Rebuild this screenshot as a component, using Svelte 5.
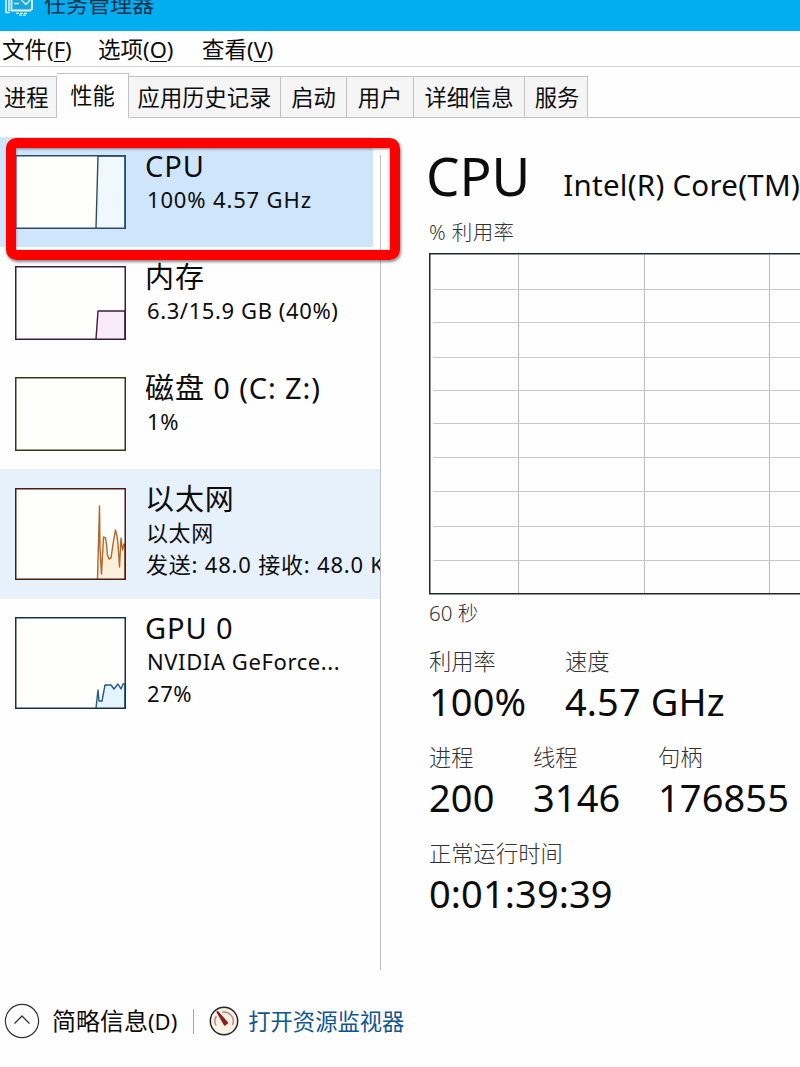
<script>
  const menus = [
    { label: '文件', key: 'F', width: 96 },
    { label: '选项', key: 'O', width: 104 },
    { label: '查看', key: 'V', width: 100 },
  ];

  const tabs = [
    { label: '进程', width: 57 },
    { label: '性能', width: 72 },
    { label: '应用历史记录', width: 152 },
    { label: '启动', width: 66 },
    { label: '用户', width: 67 },
    { label: '详细信息', width: 111 },
    { label: '服务', width: 63 },
  ];
  let activeTab = $state('性能');

  const resources = [
    { id: 'cpu', title: 'CPU', lines: ['100% 4.57 GHz'], stroke: '#2c4c66', fill: '#eef8fd', h: 74,
      path: 'M81 73 L83 1 L110 1 L110 73' },
    { id: 'mem', title: '内存', lines: ['6.3/15.9 GB (40%)'], stroke: '#3f1a40', fill: '#f8ecf8', h: 74,
      path: 'M81 73 L83 45 L110 45 L110 73' },
    { id: 'disk', title: '磁盘 0 (C: Z:)', lines: ['1%'], stroke: '#35391a', fill: 'none', h: 74, path: '' },
    { id: 'net', title: '以太网', lines: ['以太网', '发送: 48.0 接收: 48.0 Kbps'], stroke: '#4a1f12', fill: '#fcefdc', h: 92,
      line: '#b4652a',
      path: 'M82.5 91 L84.5 18 L85 60 L86.5 86 L88.5 49 L90.5 50 L91.5 56 L92.5 67 L94 71 L96 70 L98 56 L99 50 L100.5 42 L102 48 L103 56 L104.5 79 L106 50 L107.5 62 L109 56 L110 56 L110 91' },
    { id: 'gpu', title: 'GPU 0', lines: ['NVIDIA GeForce...', '27%'], stroke: '#16324a', fill: '#e3f4fc', h: 92,
      line: '#235a80',
      path: 'M81 91 L83 73 L84 84 L87 84 L90 68 L96 68 L99 72 L103 67 L106 72 L108 67 L110 67 L110 91' },
  ];
  let selected = $state('cpu');

  const gridX = [89, 215, 340];
  const gridY = [36, 69, 104, 137, 170, 204, 238, 273, 307];

  const stats = [
    [
      { label: '利用率', value: '100%', width: 136 },
      { label: '速度', value: '4.57 GHz', width: 200 },
    ],
    [
      { label: '进程', value: '200', width: 104 },
      { label: '线程', value: '3146', width: 125 },
      { label: '句柄', value: '176855', width: 140 },
    ],
    [{ label: '正常运行时间', value: '0:01:39:39', width: 240 }],
  ];
</script>

<div class="window">
  <header class="titlebar">
    <svg class="app-icon" width="34" height="18" viewBox="0 0 34 18">
      <path d="M6 0 V12.5 H10 M9 0 V11" fill="none" stroke="#d9f2fd" stroke-width="1.6" />
      <path d="M11.5 -6 H32 V9 L30 10.5 H11.5 Z" fill="#1ba6df" stroke="#eefaff" stroke-width="1.8" />
      <path d="M14 3.5 H19 M21.5 0 L26 4.5 L30 0" fill="none" stroke="#c9edfb" stroke-width="1.5" />
      <path d="M16 13.4 H28 M19 15.2 H27" stroke="#e2f5fd" stroke-width="1.2" stroke-dasharray="3 1" />
    </svg>
    <span>任务管理器</span>
  </header>

  <nav class="menubar">
    {#each menus as m (m.key)}
      <span class="menu" style="width: {m.width}px">{m.label}<span class="key">(<u>{m.key}</u>)</span></span>
    {/each}
  </nav>

  <div class="tabs">
    {#each tabs as t (t.label)}
      <button class="tab" class:active={t.label === activeTab} style="width: {t.width}px" onclick={() => (activeTab = t.label)}>
        {t.label}
      </button>
    {/each}
    <div class="tab-rest"></div>
  </div>

  <div class="body">
    <aside class="sidebar">
      {#each resources as r (r.id)}
        <button class="item {r.id}" class:selected={r.id === selected} onclick={() => (selected = r.id)}>
          <svg class="thumb" width="111" height={r.h} viewBox="0 0 111 {r.h}">
            <rect x="0.75" y="0.75" width="109.5" height={r.h - 1.5} fill="#fefefd" />
            {#if r.path}
              <path d={r.path} fill={r.fill} stroke={r.line ?? r.stroke} stroke-width="1.4" stroke-linejoin="round" />
            {/if}
            <rect x="0.75" y="0.75" width="109.5" height={r.h - 1.5} fill="none" stroke={r.stroke} stroke-width="1.5" />
          </svg>
          <div class="info">
            <div class="title">{r.title}</div>
            {#each r.lines as line}
              <div class="line">{line}</div>
            {/each}
          </div>
        </button>
      {/each}
      <div class="divider"></div>
      <div class="marker"></div>
    </aside>

    <main class="detail">
      <div class="heading">
        <h1>CPU</h1>
        <span class="model">Intel(R) Core(TM)</span>
      </div>
      <div class="caption top">% 利用率</div>
      <svg class="graph" width="380" height="342" viewBox="0 0 380 342">
        {#each gridX as x}
          <line x1={x + 0.5} y1="2" x2={x + 0.5} y2="340" stroke="#bcbcbe" />
        {/each}
        {#each gridY as y}
          <line x1="4" y1={y + 0.5} x2="380" y2={y + 0.5} stroke="#c9c9cb" />
        {/each}
        <rect x="0.75" y="0.75" width="390" height="340" fill="none" stroke="#1e2830" stroke-width="1.5" />
      </svg>
      <div class="caption">60 秒</div>

      <div class="stats">
        {#each stats as row}
          <div class="stat-row">
            {#each row as s (s.label)}
              <div class="stat" style="width: {s.width}px">
                <div class="label">{s.label}</div>
                <div class="value">{s.value}</div>
              </div>
            {/each}
          </div>
        {/each}
      </div>
    </main>
  </div>

  <footer class="footer">
    <svg width="36" height="36" viewBox="0 0 36 36" fill="none" stroke="#333">
      <circle cx="18" cy="18" r="16.6" stroke-width="1.2" />
      <path d="M10.5 20.5 L18 13 L25.5 20.5" stroke-width="1.3" />
    </svg>
    <span class="less">简略信息<span class="key">(D)</span></span>
    <span class="sep"></span>
    <svg class="gauge" width="30" height="30" viewBox="0 0 30 30">
      <circle cx="15" cy="15" r="13.7" fill="#f6f2e4" stroke="#2c2424" stroke-width="1.5" />
      <path d="M7 19.5 A9.3 9.3 0 0 1 7.5 10 M13 6.2 A9.3 9.3 0 0 1 23.5 19" fill="none" stroke="#c98483" stroke-width="1.5" />
      <path d="M8.5 6 L18.2 16.8 L15.8 18.8 Z" fill="#8e1d24" stroke="#8e1d24" stroke-width="2" stroke-linejoin="round" />
    </svg>
    <a href="#resmon">打开资源监视器</a>
  </footer>
</div>

<style>
  :global(body) {
    margin: 0;
    background: #fefefe;
  }
  .window {
    width: 800px;
    height: 1067px;
    overflow: hidden;
    display: flex;
    flex-direction: column;
    background: #fefefe;
    color: #0c0c0c;
    font-family: 'Noto Sans', 'Noto Sans CJK SC', sans-serif;
    font-size: 22px;
  }
  button {
    font: inherit;
    color: inherit;
    border: 0;
    margin: 0;
    padding: 0;
    background: none;
    text-align: left;
  }
  .titlebar {
    height: 31px;
    flex: none;
    display: flex;
    align-items: flex-start;
    background: #02aeef;
    overflow: hidden;
  }
  .titlebar span {
    margin: -13px 0 0 10px;
    line-height: 32px;
    color: #07304c;
  }
  .app-icon {
    flex: none;
  }
  .menubar {
    height: 35px;
    flex: none;
    display: flex;
    padding-left: 2px;
    border-bottom: 1px solid #d4d4d6;
    line-height: 37px;
    font-size: 22.5px;
  }
  .key {
    font-size: 22px;
  }
  .menu {
    white-space: nowrap;
  }
  .menu u {
    text-decoration-thickness: 1px;
    text-underline-offset: 3px;
  }
  .tabs {
    flex: none;
    height: 45px;
    margin-top: 6px;
    display: flex;
    align-items: flex-end;
  }
  .tab {
    box-sizing: border-box;
    flex: none;
    height: 42px;
    line-height: 41px;
    background: #f5f5f5;
    border: 1px solid #c2c2c4;
    border-left: 0;
    text-align: center;
    white-space: nowrap;
    font-size: 22.3px;
  }
  .tab:first-child {
    text-align: left;
    padding-left: 4px;
  }
  .tab.active {
    height: 45px;
    line-height: 38px;
    background: #fefefe;
    border-bottom-color: #fefefe;
  }
  .tab:last-of-type {
    padding-left: 2px;
  }
  .tab-rest {
    flex: 1;
    border-bottom: 1px solid #c2c2c4;
  }
  .body {
    flex: none;
    height: 852px;
    display: flex;
  }
  .sidebar {
    position: relative;
    flex: none;
    width: 381px;
    padding-top: 19px;
    box-sizing: border-box;
  }
  .item {
    box-sizing: border-box;
    width: 380px;
    height: 111px;
    display: flex;
    padding: 18px 0 0 15px;
    overflow: hidden;
  }
  .item.selected {
    width: 373px;
    height: 110px;
    margin-bottom: 1px;
    background: #cfe5fb;
  }
  .item.disk {
    height: 110px;
  }
  .item.net {
    height: 130px;
    padding-top: 19px;
    background: #e6f1fc;
  }
  .item.gpu {
    height: 129px;
  }
  .thumb {
    flex: none;
  }
  .info {
    margin: -7px 0 0 19px;
    white-space: nowrap;
  }
  .title {
    height: 35px;
    line-height: 35px;
    font-size: 29px;
    letter-spacing: 0.9px;
  }
  .line {
    height: 31.5px;
    line-height: 32px;
    padding-left: 2px;
    letter-spacing: 0.6px;
  }
  .cpu .line {
    letter-spacing: 0.85px;
  }
  .net .line {
    padding-left: 1px;
  }
  .net .line:last-child {
    letter-spacing: 0.8px;
  }
  .divider {
    position: absolute;
    left: 380px;
    top: 37px;
    width: 1px;
    height: 815px;
    background: #bdbdbf;
  }
  .marker {
    position: absolute;
    left: 6px;
    top: 20px;
    box-sizing: border-box;
    width: 394px;
    height: 122px;
    border: 10px solid #fe0000;
    border-radius: 10px;
    box-shadow: 1px 2px 3px rgba(60, 60, 60, 0.6), inset 0 1px 3px rgba(60, 60, 60, 0.6);
  }
  .detail {
    flex: 1;
    min-width: 0;
    padding-left: 48px;
    overflow: hidden;
    white-space: nowrap;
  }
  .heading {
    height: 96px;
    display: flex;
    align-items: baseline;
    line-height: 116px;
  }
  h1 {
    margin: 0 0 0 -3px;
    width: 140px;
    font-size: 53px;
    font-weight: 400;
  }
  .model {
    font-size: 29.5px;
    letter-spacing: 0.25px;
  }
  .caption {
    height: 37px;
    line-height: 36px;
    font-size: 20.5px;
    font-weight: 300;
    color: #333;
  }
  .caption.top {
    height: 39px;
    letter-spacing: 0.4px;
  }
  .graph {
    display: block;
  }
  .stats {
    margin-top: 14px;
  }
  .stat-row {
    display: flex;
    height: 96px;
  }
  .stat {
    flex: none;
  }
  .label {
    height: 32px;
    line-height: 32px;
    font-size: 22.3px;
    font-weight: 300;
    color: #333;
  }
  .value {
    height: 48px;
    line-height: 47px;
    font-size: 38px;
    letter-spacing: 0.1px;
  }
  .footer {
    flex: none;
    height: 102px;
    display: flex;
    align-items: center;
    padding-left: 4px;
  }
  .less {
    margin: -3px 0 0 12px;
    font-size: 24px;
  }
  .sep {
    width: 1px;
    height: 25px;
    margin: 0 15px 0 16px;
    background: #a5a5a8;
  }
  a {
    margin: -2px 0 0 9px;
    font-size: 22.3px;
    color: #0f5590;
    text-decoration: none;
  }
</style>
